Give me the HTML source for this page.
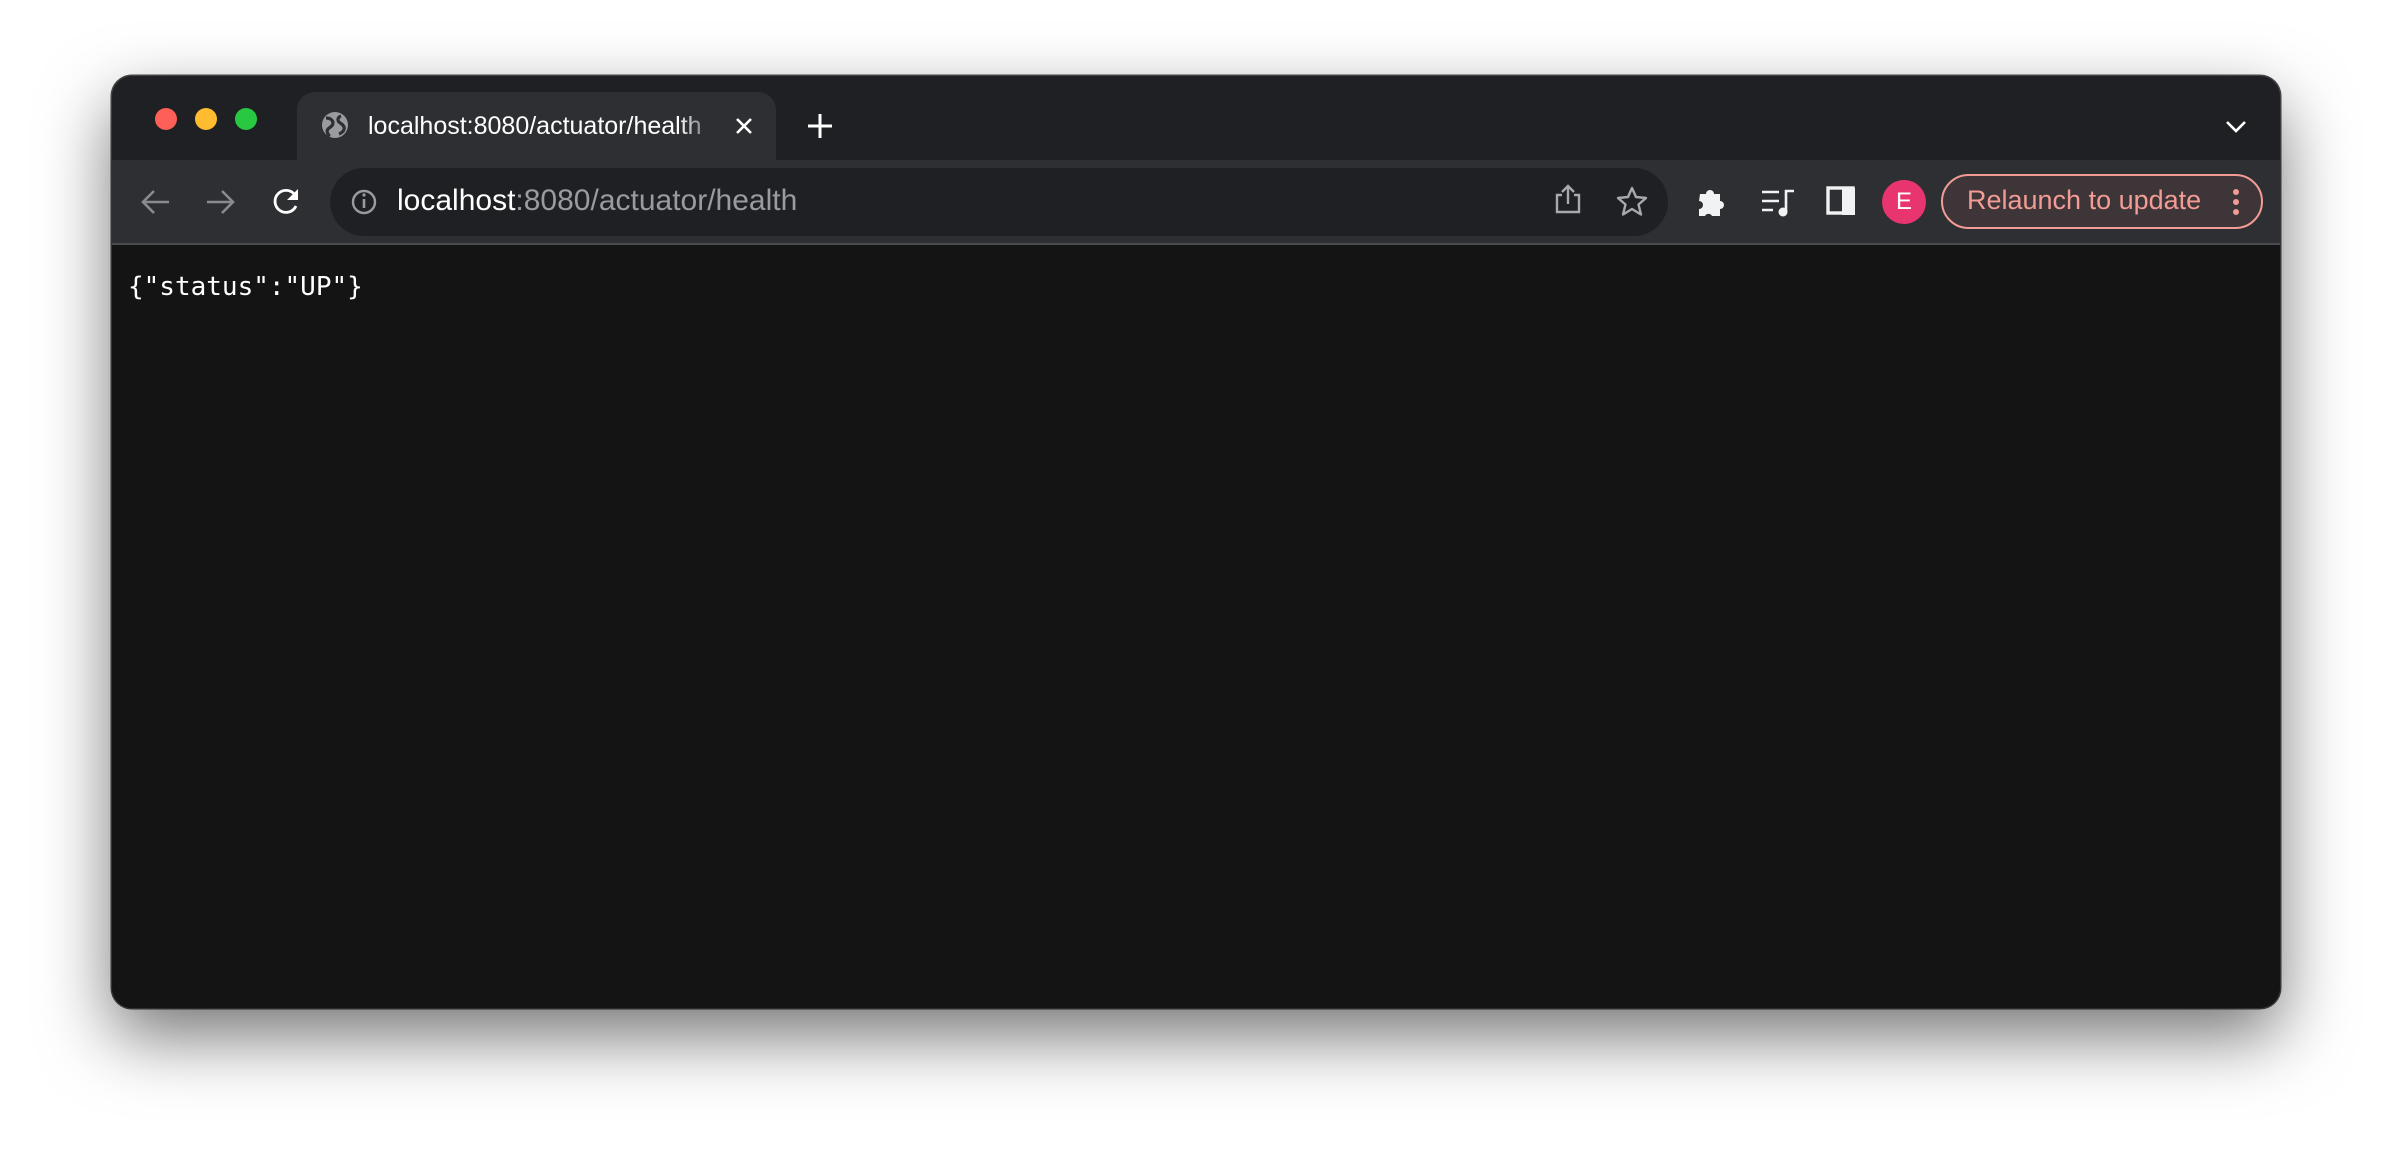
<!DOCTYPE html>
<html><head><meta charset="utf-8"><style>
html,body{margin:0;padding:0;width:2392px;height:1156px;background:#fff;overflow:hidden}
.win{position:absolute;left:112px;top:76px;width:2168px;height:932px;border-radius:20px;background:#1f2023;overflow:hidden;box-shadow:0 28px 70px rgba(0,0,0,0.55),0 0 0 1.5px #4a4a4c}
.tab{position:absolute;left:185px;top:16px;width:479px;height:84px;background:#2e2f33;border-radius:18px 18px 0 0}
.tb{position:absolute;left:0;top:84px;width:2168px;height:83px;background:#2e2f33;border-bottom:2px solid #4a4b4f}
.omni{position:absolute;left:218px;top:92px;width:1338px;height:68px;border-radius:34px;background:#1f2023}
.content{position:absolute;left:0;top:169px;width:2168px;height:763px;background:#141414}
.t{position:absolute;font-family:"Liberation Sans",sans-serif;white-space:nowrap}
.json{position:absolute;left:16px;top:26px;font-family:"DejaVu Sans Mono","Liberation Mono",monospace;font-size:26px;color:#fff;line-height:32px}
.dot{position:absolute;width:22px;height:22px;border-radius:50%;top:32px}
</style></head><body>
<div class="win">
 <div class="dot" style="left:43px;background:#fe5f57"></div>
 <div class="dot" style="left:83px;background:#febc2e"></div>
 <div class="dot" style="left:123px;background:#28c840"></div>
 <div class="tab"></div>
 <div class="t" style="left:256px;top:36px;font-size:25px;color:#fff;width:352px;overflow:hidden;-webkit-mask-image:linear-gradient(90deg,#000 88%,transparent)">localhost:8080/actuator/health</div>
 <div class="tb"></div>
 <div class="omni"></div>
 <div class="t" style="left:285px;top:108px;font-size:30px;color:#fff">localhost<span style="color:#9a9ba0">:8080/actuator/health</span></div>
 <div style="position:absolute;left:1829px;top:98px;width:318px;height:51px;border:2px solid #f29c95;border-radius:28px;background:#3d3538"></div>
 <div class="t" style="left:1855px;top:109px;font-size:27px;color:#f29c95">Relaunch to update</div>
 <div style="position:absolute;left:1770px;top:104px;width:44px;height:44px;border-radius:50%;background:#e8356f;color:#fff;font:24px 'Liberation Sans',sans-serif;text-align:center;line-height:44px">E</div>
 <div class="content"><div class="json">{"status":"UP"}</div></div>
 <svg width="2168" height="932" style="position:absolute;left:0;top:0" fill="none">
  <circle cx="223" cy="49" r="13" fill="#9a9ba0"/>
  <path d="M214 42c4 0 7 2 7 5s-3 4-5 6 0 6 2 7M229 40c-3 1-4 4-2 6s4 2 5 5c1 3-2 6-5 7" stroke="#2e2f33" stroke-width="3.2"/>
  <path d="M625 43l14 14M639 43l-14 14" stroke="#fff" stroke-width="2.6"/>
  <path d="M708 38v24M696 50h24" stroke="#fff" stroke-width="3"/>
  <path d="M2115 46l9 9 9-9" stroke="#fff" stroke-width="2.6"/>
  <path d="M57 126H31M42 115l-11 11 11 11" stroke="#8a8b8f" stroke-width="2.6"/>
  <path d="M95 126h26M110 115l11 11-11 11" stroke="#8a8b8f" stroke-width="2.6"/>
  <path d="M183 119a11 11 0 1 0 1 11" stroke="#fff" stroke-width="2.8"/>
  <path d="M186 113v11h-11z" fill="#fff"/>
  <circle cx="252" cy="126" r="11" stroke="#9a9ba0" stroke-width="2.4"/>
  <path d="M252 123v9" stroke="#9a9ba0" stroke-width="2.6"/><circle cx="252" cy="119" r="1.6" fill="#9a9ba0"/>
  <path d="M1450 119h-5v17h22v-17h-5M1456 128v-17M1450 116l6-6 6 6" stroke="#a8a9ad" stroke-width="2.4"/>
  <path d="M1520 112l4 9 10 1-7.5 6.5 2.5 10-9-5.5-9 5.5 2.5-10-7.5-6.5 10-1z" stroke="#a8a9ad" stroke-width="2.4" stroke-linejoin="round"/>
  <path d="M1588 118h6a4 4 0 0 1 8 0h6v7a4 4 0 0 1 0 8v7h-8a4 4 0 0 0-7 0h-6v-7a4 4 0 0 0 0-8z" fill="#f1f2f4"/>
  <path d="M1650 116h17M1650 125h17M1650 134h11" stroke="#f1f2f4" stroke-width="2.6"/>
  <path d="M1674 136v-21h8" stroke="#f1f2f4" stroke-width="2.6"/><circle cx="1671" cy="136" r="4.5" fill="#f1f2f4"/>
  <rect x="1716" y="112" width="25" height="25" stroke="#f1f2f4" stroke-width="3.4"/>
  <rect x="1730" y="112" width="13" height="27" fill="#f1f2f4"/>
  <circle cx="2124" cy="116" r="3" fill="#f29c95"/><circle cx="2124" cy="126" r="3" fill="#f29c95"/><circle cx="2124" cy="136" r="3" fill="#f29c95"/>
 </svg>
</div>
</body></html>
